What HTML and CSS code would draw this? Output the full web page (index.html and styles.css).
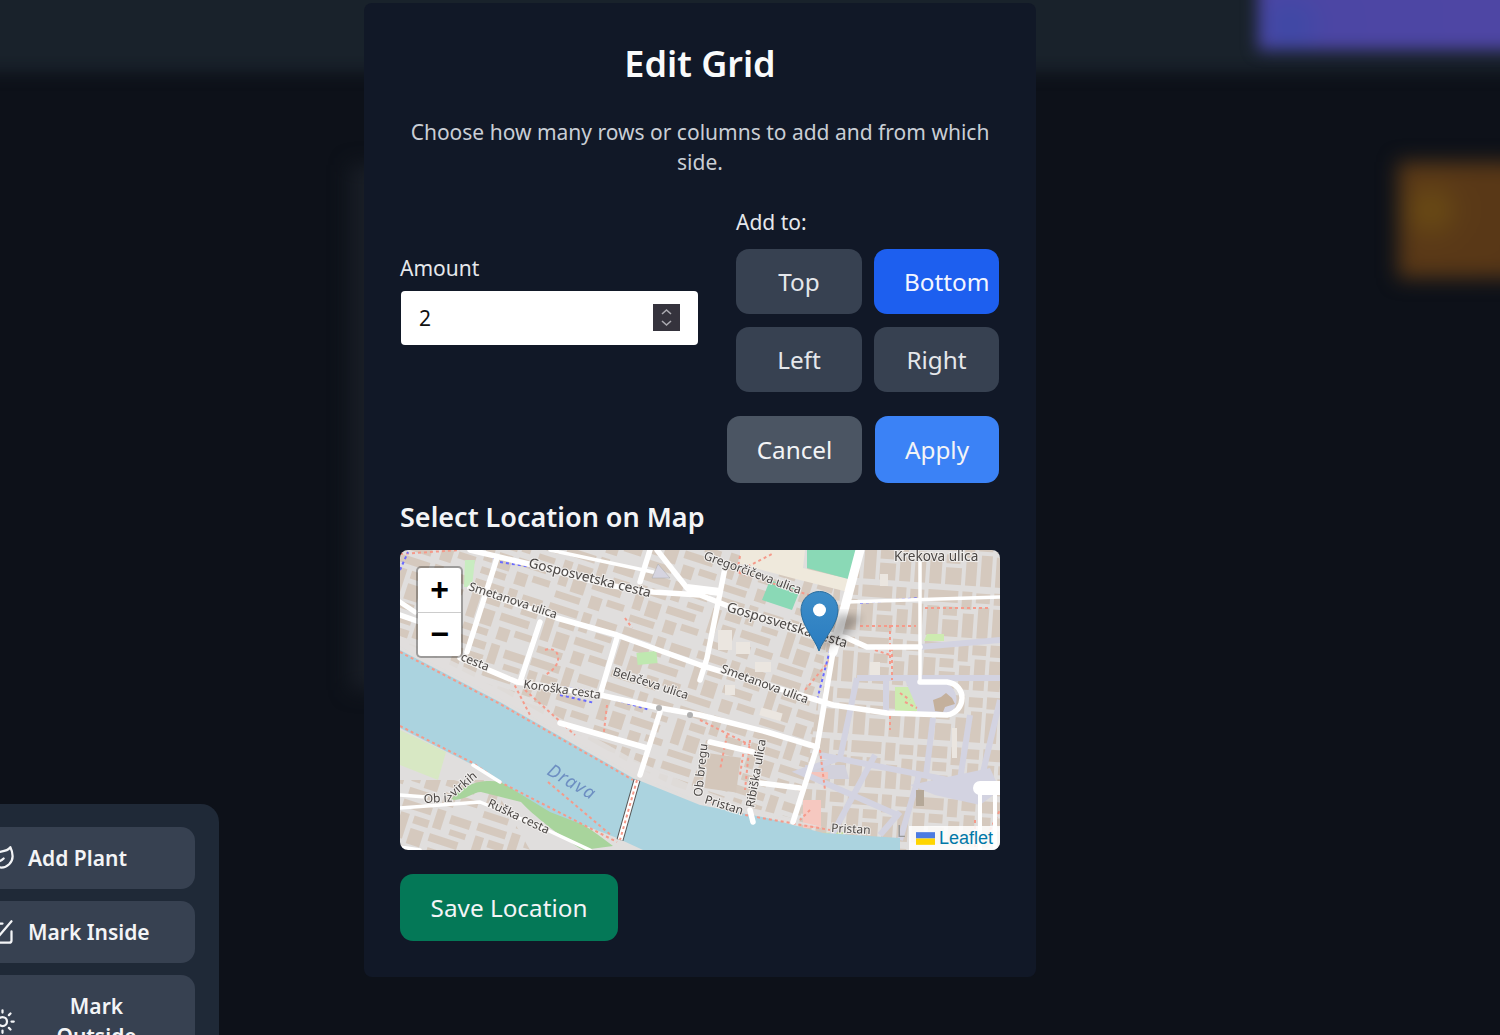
FILE: index.html
```html
<!DOCTYPE html>
<html>
	<head>
		<meta charset="UTF-8">
		<title>Edit Grid</title>
		<link rel="stylesheet" href="styles.css">
	</head>
	<body>
		<div class="backdrop">
			<div class="bg-topbar"></div>
			<div class="bg-purple"></div>
			<div class="bg-orange"></div>
			<div class="bg-card"></div>
		</div>

		<div class="side-panel">
			<button class="side-btn">
				<svg class="side-icon" viewBox="0 0 24 24"><path d="M11 20A7 7 0 0 1 9.8 6.1C15.5 5 17 4.48 19 2c1 2 2 4.18 2 8 0 5.5-4.78 10-10 10Z"/><path d="M2 21c0-3 1.85-5.36 5.08-6C9.5 14.52 12 13 13 12"/></svg>
				<span>Add Plant</span>
			</button>
			<button class="side-btn">
				<svg class="side-icon" viewBox="0 0 24 24"><path d="M12 4H5a2 2 0 0 0-2 2v13a2 2 0 0 0 2 2h13a2 2 0 0 0 2-2v-8"/><path d="M9 15l11-13"/></svg>
				<span>Mark Inside</span>
			</button>
			<button class="side-btn">
				<svg class="side-icon" viewBox="0 0 24 24"><circle cx="12" cy="12" r="4"/><path d="M12 2v2M12 20v2M4.9 4.9l1.4 1.4M17.7 17.7l1.4 1.4M2 12h2M20 12h2M6.3 17.7l-1.4 1.4M19.1 4.9l-1.4 1.4"/></svg>
				<span class="side-wrap">Mark Outside</span>
			</button>
		</div>

		<div class="modal-wrap">
			<div class="modal">
				<h2 class="modal-title">Edit Grid</h2>
				<p class="modal-text">Choose how many rows or columns to add and from which side.</p>

				<div class="grid-form">
					<div class="amount">
						<label class="field-label">Amount</label>
						<div class="amount-box">
							<span>2</span>
							<span class="spin">
								<svg viewBox="0 0 27 27"><path d="M9 10l4.500-4 4.500 4M9 17l4.500 4 4.500-4"/></svg>
							</span>
						</div>
					</div>
					<div class="sides">
						<label class="field-label">Add to:</label>
						<div class="side-grid">
							<button class="opt">Top</button>
							<button class="opt opt-on">Bottom</button>
							<button class="opt">Left</button>
							<button class="opt">Right</button>
						</div>
					</div>
				</div>

				<div class="actions">
					<button class="act act-cancel">Cancel</button>
					<button class="act act-apply">Apply</button>
				</div>

				<h3 class="map-title">Select Location on Map</h3>
				<div class="map">
					<svg class="map-svg" viewBox="0 0 600 300" width="600" height="300">
						<defs>
							<pattern id="bldW" width="78" height="58" patternUnits="userSpaceOnUse" patternTransform="rotate(18)">
								<g fill="#d5c9be">
									<rect x="3" y="3" width="30" height="8"/><rect x="38" y="2" width="9" height="20"/><rect x="53" y="4" width="21" height="9"/>
									<rect x="4" y="16" width="9" height="26"/><rect x="18" y="16" width="16" height="8"/><rect x="18" y="29" width="14" height="16"/>
									<rect x="38" y="28" width="30" height="8"/><rect x="56" y="18" width="17" height="6"/><rect x="40" y="42" width="12" height="13"/><rect x="57" y="41" width="18" height="7"/>
									<rect x="5" y="48" width="26" height="7"/>
								</g>
							</pattern>
							<pattern id="bldE" width="66" height="52" patternUnits="userSpaceOnUse" patternTransform="rotate(4)">
								<g fill="#d5c9be">
									<rect x="2" y="2" width="30" height="12"/><rect x="36" y="2" width="10" height="18"/><rect x="50" y="3" width="14" height="10"/>
									<rect x="2" y="18" width="12" height="30"/><rect x="18" y="18" width="14" height="9"/><rect x="18" y="31" width="16" height="17"/>
									<rect x="38" y="24" width="11" height="24"/><rect x="53" y="17" width="11" height="31"/>
								</g>
							</pattern>
							<linearGradient id="pin" x1="0" y1="0" x2="0" y2="1">
								<stop offset="0" stop-color="#3d8dc8"/>
								<stop offset="1" stop-color="#2a7cc0"/>
							</linearGradient>
						</defs>

						<rect width="600" height="300" fill="#e0dedd"/>

						<!-- built up blocks -->
						<path d="M0 0H300V250L233 215L100 140L0 90z" fill="url(#bldW)"/>
						<path d="M300 0H440L400 270L300 245z" fill="url(#bldW)"/>
						<path d="M440 0H600V300H395z" fill="url(#bldE)"/>
						<path d="M0 230H90L130 300H0z" fill="url(#bldW)"/>

						<!-- parks -->
						<path d="M340 0h65l-2 18 50 12-5 12-56-14-52-14z" fill="#efe9dc"/>
						<path d="M407 0h57l-12 30-45-12z" fill="#8ad9b6"/>
						<path d="M370 30l30 10-8 20-30-10z" fill="#8ad9b6"/>
						<path d="M65 10h10l-3 27h-8z" fill="#c8ecc0"/>
						<rect x="237" y="102" width="20" height="12" fill="#bfe8b0" transform="rotate(-6 247 108)"/>
						<rect x="495" y="137" width="24" height="24" fill="#cdebb0"/>
						<path d="M527 84h17v7h-20z" fill="#cdebb0"/>
						<path d="M0 180l46 22-8 28-38-15z" fill="#d8e8c4"/>
						<path d="M100 232c30 12 70 30 113 64l-30 4c-25-15-50-35-62-48l-40-10c-8 0-14 8-30 8 8-14 30-22 49-18z" fill="#a8d49c"/>
						<path d="M420 283l25-1-12 12z" fill="#c8e0a0"/>

						<!-- squares and pedestrian areas -->
						<path d="M405 215h40l4 14h-44z" fill="#d2d1dc"/>
						<rect x="403" y="250" width="18" height="28" fill="#f6c8c0"/>
						<rect x="406" y="222" width="22" height="7" fill="#f4c4bc"/>

						<!-- a few big buildings -->
						<rect x="307" y="205" width="32" height="35" transform="rotate(8 320 220)" fill="#d3c6ba"/>
						<g fill="#ebe6e0">
							<rect x="336" y="92" width="14" height="12"/><rect x="470" y="112" width="10" height="14"/><rect x="552" y="178" width="5" height="30"/><rect x="480" y="24" width="8" height="12"/>
							<rect x="318" y="80" width="14" height="20"/><rect x="355" y="112" width="16" height="10"/>
							<rect x="325" y="135" width="10" height="10"/><rect x="360" y="160" width="22" height="8" transform="rotate(16 370 164)"/>
						</g>

						<!-- lavender lanes -->
						<g fill="none" stroke="#d3d3e1" stroke-width="6">
							<path d="M520 97L600 90"/>
							<path d="M457 128L440 208L400 222L500 266"/>
							<path d="M457 128H600"/>
							<path d="M486 130V165"/>
							<path d="M520 132V165"/>
							<path d="M533 168L526 226"/>
							<path d="M570 165L560 230"/>
							<path d="M420 205L600 240"/>
							<path d="M475 205L432 285"/>
							<path d="M500 262L480 285"/>
							<path d="M580 235L600 150"/>
							<path d="M520 222L500 290"/>
						</g>
						<path d="M505 130H540C560 135 562 160 545 165H520z" fill="#d3d3e1"/>
						<path d="M533 150l8-3 5-4 6 5 3 6-10 3-2 5-8-1z" fill="#c4b09c"/>
						<path d="M510 235L590 218L600 240L580 255L535 245z" fill="#d3d3e1"/>
						<rect x="516" y="240" width="8" height="16" fill="#b5a898"/>

						<!-- river -->
						<path d="M0 100L100 152L233 228L300 255L367 268L423 283L500 288V300H243L217 288L150 262L73 215L0 178z" fill="#abd3df"/>
						<path d="M0 102L100 154L233 230L300 257L367 270L423 283L395 280L300 245L233 215L100 140L0 92z" fill="#e0dedd" opacity=".85" transform="translate(0 -6)"/>

						<!-- footways -->
						<g fill="none" stroke="#f59a8a" stroke-width="2" stroke-dasharray="3 3">
							<path d="M0 102L100 154L233 230"/>
							<path d="M0 176L73 213L100 232L217 292"/>
							<path d="M148 232L212 286"/>
							<path d="M112 130L130 165M125 140L175 185M145 100C160 95 165 115 145 125"/>
							<path d="M207 155L203 190M225 68L232 78"/>
							<path d="M0 4L60 0M340 6L337 22L412 46M337 22L372 4"/>
							<path d="M320 40L306 110M350 190L345 240"/>
							<path d="M430 110L405 140M475 100L490 105M492 98L492 130"/>
							<path d="M460 76H516M490 75V115M525 58H590"/>
							<path d="M300 170L350 195M327 185L320 220M345 192L340 225"/>
							<path d="M420 200L425 240M410 260L400 270M306 250L345 265L430 280"/>
							<path d="M500 143L510 150M505 152L517 158M490 166V180"/>
							<path d="M575 270V300M590 280L600 260"/>
						</g>
						<g fill="none" stroke="#6a6aff" stroke-width="2" stroke-dasharray="3 3">
							<path d="M0 20L8 2M75 0L95 8M100 12L150 20M215 35L230 38"/>
							<path d="M140 134L200 143M160 145L195 153M210 148L250 160"/>
							<path d="M430 100L417 150M460 53L520 48"/>
						</g>

						<!-- roads -->
						<g fill="none" stroke="#fff" stroke-linecap="round" stroke-linejoin="round">
							<g stroke-width="5.500">
								<path d="M70 0L133 15L207 35L253 42L300 45L333 58L400 78L447 88L467 97H520"/>
								<path d="M0 65L20 72M70 38L157 68L217 85L300 115L410 148L433 155L487 163L547 165C566 162 568 135 547 132H520"/>
								<path d="M60 108L117 132L200 145L260 158L300 165L367 182L417 197"/>
								<path d="M433 102L417 197L393 272"/>
								<path d="M97 8L67 102M140 72L120 132M217 88L200 145M260 162L240 225M160 173L247 198"/>
								<path d="M257 0L287 38M250 0L240 32"/>
								<path d="M325 18L307 108L300 130"/>
								<path d="M310 192L353 202"/>
								<path d="M360 233L400 238M350 260L353 272"/>
							</g>
							<path d="M460 0L433 102" stroke-width="9"/>
							<g stroke-width="3.500">
								<path d="M520 12V132"/>
								<path d="M447 52L600 47"/>
								<path d="M150 0L253 22"/>
								<path d="M0 245L26 247M0 258L80 252L143 278L190 300M73 215L100 232"/>
								<path d="M0 297L20 300"/>
							</g>
							<path d="M580 238h20" stroke-width="14"/>
							<path d="M580 240V300" stroke-width="4"/>
							<path d="M595 245V300" stroke-width="4"/>
							<path d="M0 52L15 62" stroke-width="5"/>
						</g>
						<path d="M287 38L320 42" stroke="#fff" stroke-width="8"/>
						<path d="M258 14L270 28L252 28z" fill="#d5d4e0" stroke="#aaa" stroke-width=".5"/>
						<circle cx="259" cy="158" r="3" fill="#b0b0b0"/>
						<circle cx="290" cy="165" r="3" fill="#b0b0b0"/>

						<!-- bridge -->
						<path d="M237 230L220 290" stroke="#555" stroke-width="7"/>
						<path d="M237 230L220 290" stroke="#fff" stroke-width="5"/>
						<path d="M237 230L220 290" stroke="#f59a8a" stroke-width="2" stroke-dasharray="3 3"/>

						<!-- labels -->
						<g class="map-labels">
							<text class="map-big" transform="translate(128 17) rotate(14)">Gosposvetska cesta</text>
							<text transform="translate(68 40) rotate(18)">Smetanova ulica</text>
							<text transform="translate(60 110) rotate(22)">cesta</text>
							<text transform="translate(123 138) rotate(8)">Koroška cesta</text>
							<text transform="translate(212 125) rotate(18)">Belačeva ulica</text>
							<text transform="translate(87 256) rotate(25)">Ruška cesta</text>
							<text transform="translate(24 253) rotate(-3)">Ob iz</text>
							<text transform="translate(54 247) rotate(-40)">virkih</text>
							<text transform="translate(303 9) rotate(20)">Gregorčičeva ulica</text>
							<text class="map-big" transform="translate(494 11)">Krekova ulica</text>
							<text class="map-big" transform="translate(326 61) rotate(17)">Gosposvetska cesta</text>
							<text transform="translate(320 122) rotate(20)">Smetanova ulica</text>
							<text transform="translate(354 258) rotate(-80)">Ribiška ulica</text>
							<text transform="translate(302 247) rotate(-84)">Ob bregu</text>
							<text transform="translate(304 253) rotate(17)">Pristan</text>
							<text transform="translate(431 282) rotate(3)">Pristan</text>
							<text x="497" y="287" class="map-faint">L</text>
							<text transform="translate(146 224) rotate(30)" class="map-river">Drava</text>
						</g>
					</svg>

					<div class="zoom-ctl">
						<span class="zoom-btn">+</span>
						<span class="zoom-btn">−</span>
					</div>

					<svg class="marker" viewBox="0 0 74 62" width="74" height="62">
						<defs>
							<filter id="soft"><feGaussianBlur stdDeviation="4"/></filter>
						</defs>
						<path d="M20 60L38 22L62 26L46 44z" fill="#000" opacity=".28" filter="url(#soft)"/>
						<path d="M19 60C15 48 1 34 1 19A18 18 0 0 1 38 19C38 34 23 48 19 60z" fill="url(#pin)" stroke="#2b6e9e"/>
						<circle cx="19.500" cy="19" r="6.500" fill="#fff"/>
					</svg>

					<div class="attrib">
						<svg viewBox="0 0 12 8" width="19" height="13"><rect width="12" height="4" fill="#4c7be1"/><rect y="4" width="12" height="4" fill="#ffd500"/></svg>
						<span>Leaflet</span>
					</div>
				</div>

				<button class="save-btn">Save Location</button>
			</div>
		</div>
	</body>
</html>
```

FILE: styles.css
```css
*{margin: 0;padding: 0;box-sizing: border-box;}
html,body{height: 100%;}
body{background: #0d1119;font-family: "Noto Sans",sans-serif;color: #fff;position: relative;overflow: hidden;}
button{font-family: inherit;border: 0;color: inherit;}

/* blurred page behind the dialog */
.backdrop{position: absolute;left: 0;top: 0;width: 100%;height: 100%;overflow: hidden;}
.bg-topbar{position: absolute;left: -20px;right: -20px;top: -20px;height: 92px;background: #19222b;filter: blur(8px);}
.bg-purple{position: absolute;left: 1258px;top: -20px;width: 300px;height: 70px;background: radial-gradient(circle at 32px 45px,#3d49a6 0,#4c46a4 40px,#4f46a4 100%);filter: blur(8px);}
.bg-orange{position: absolute;left: 1398px;top: 162px;width: 200px;height: 116px;background: radial-gradient(circle at 33px 48px,#6d4e14 0,#5a3917 34px,#553416 100%);filter: blur(10px);}
.bg-card{position: absolute;left: 350px;top: 165px;width: 100px;height: 525px;background: #191e26;filter: blur(10px);}

/* sidebar sticks out on the left */
.side-panel{position: absolute;left: -46px;top: 804px;width: 265px;height: 300px;padding: 23px 24px;background: #1f2937;border-radius: 18px;display: flex;flex-direction: column;gap: 12px;}
.side-btn{display: flex;align-items: center;gap: 12px;padding: 16px 30px 16px 11px;background: #374151;border-radius: 14px;font-size: 21px;line-height: 30px;font-weight: 600;color: #f3f4f6;text-align: center;}
.side-icon{width: 27px;height: 27px;flex: none;fill: none;stroke: #f3f4f6;stroke-width: 2;stroke-linecap: round;stroke-linejoin: round;}
.side-wrap{flex: 1;}

/* dialog */
.modal-wrap{position: absolute;left: 364px;top: 3px;}
.modal{width: 672px;height: 974px;padding: 36px 36px 36px;background: #111827;border-radius: 8px;}
.modal-title{font-size: 36px;line-height: 50px;font-weight: 600;text-align: center;color: #f9fafb;}
.modal-text{margin-top: 28px;font-size: 21px;line-height: 30px;text-align: center;color: #c9ced5;padding: 0 6px;}

.grid-form{margin-top: 30px;display: flex;align-items: center;gap: 37px;}
.amount{width: 299px;margin-bottom: 2px;}
.field-label{display: block;font-size: 21px;line-height: 30px;color: #e5e7eb;}
.amount-box{margin: 8px 1px 0;height: 54px;padding: 0 18px;background: #fff;border-radius: 4px;display: flex;align-items: center;justify-content: space-between;color: #111;font-size: 21px;}
.spin{width: 27px;height: 27px;background: #35333d;display: block;}
.spin svg{display: block;width: 27px;height: 27px;fill: none;stroke: #aaa9b0;stroke-width: 1.600;}
.sides{width: 264px;}
.side-grid{margin-top: 12px;display: grid;grid-template-columns: 126px 125px;gap: 13px 12px;}
.opt{height: 65px;padding: 0 30px;background: #374151;border-radius: 13px;font-size: 24.300px;color: #e5e7eb;white-space: nowrap;text-align: center;}
.opt-on{background: #1d5fef;color: #f3f6ff;}

.actions{margin-top: 24px;padding-right: 1px;display: flex;justify-content: flex-end;gap: 13px;}
.act{height: 67px;border-radius: 13px;font-size: 24.300px;color: #f3f4f6;}
.act-cancel{width: 135px;background: #4b5563;}
.act-apply{width: 124px;background: #3b82f6;}

.map-title{margin-top: 14px;font-size: 27px;line-height: 40px;font-weight: 600;color: #f3f4f6;}
.map{margin-top: 13px;position: relative;width: 600px;height: 300px;border-radius: 8px;overflow: hidden;}
.map-svg{display: block;filter: blur(.6px);}
.map-labels text{font-family: "Noto Sans",sans-serif;font-size: 12px;fill: #4a4644;stroke: #f0eeec;stroke-width: 2px;paint-order: stroke;}
.map-labels .map-big{font-size: 13.600px;}
.map-labels .map-river{font-size: 18px;font-style: italic;letter-spacing: 1px;fill: #6d8fc2;stroke: #abd3df;}
.map-labels .map-faint{font-size: 16px;fill: #999;stroke: none;}

.zoom-ctl{position: absolute;left: 16px;top: 16px;width: 47px;height: 92px;border: 2px solid rgba(0,0,0,.3);border-radius: 5px;background: #fff;background-clip: padding-box;display: flex;flex-direction: column;}
.zoom-btn{flex: 1;display: flex;align-items: center;justify-content: center;padding-top: 4px;font-family: "Liberation Mono",monospace;font-weight: 700;font-size: 32px;color: #000;}
.zoom-btn:first-child{border-bottom: 1px solid #ccc;}
.marker{position: absolute;left: 400px;top: 41px;}
.attrib{position: absolute;right: 0;bottom: 0;height: 24px;padding: 0 7px;background: rgba(255,255,255,.85);display: flex;align-items: center;gap: 4px;font-family: "Liberation Sans",sans-serif;font-size: 18px;color: #0078a8;}

.save-btn{display: block;margin-top: 24px;width: 218px;height: 67px;border-radius: 13px;background: #047857;font-size: 24.300px;color: #f3f4f6;}
```
